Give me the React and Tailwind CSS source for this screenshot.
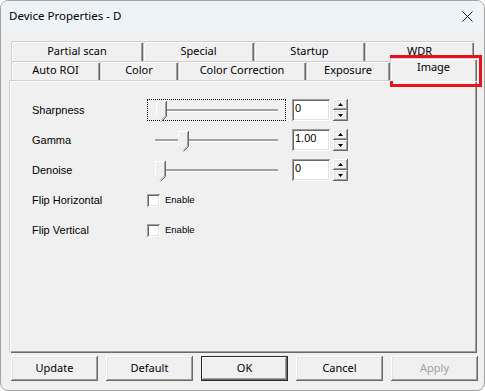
import React from "react";

const RAISED =
  "shadow-[inset_-1px_-1px_0_#696969,inset_1px_1px_0_#ffffff,inset_-2px_-2px_0_#a0a0a0,inset_2px_2px_0_#e3e3e3]";
const SUNKEN =
  "shadow-[inset_1px_1px_0_#a0a0a0,inset_-1px_-1px_0_#ffffff,inset_2px_2px_0_#696969,inset_-2px_-2px_0_#e3e3e3]";
const TAB =
  "shadow-[inset_1px_1px_0_#cfcfcf,inset_2px_2px_0_#ffffff,inset_-1px_0_0_#696969,inset_-2px_0_0_#a0a0a0]";

function Tab({ label, w, className = "" }) {
  return (
    <div
      className={`h-full flex items-center justify-center rounded-t-[2px] bg-[#f0f0f0] text-[11px] ${TAB} ${className}`}
      style={{ width: w }}
    >
      {label}
    </div>
  );
}

function Thumb({ left }) {
  return (
    <svg
      className="absolute top-[1px]"
      style={{ left }}
      width="11"
      height="21"
      viewBox="0 0 11 21"
    >
      <path d="M0.5 0.5 H10.5 V15.5 L5.5 20.5 L0.5 15.5 Z" fill="#f0f0f0" />
      <polyline points="0.5,15.5 0.5,0.5 10,0.5" fill="none" stroke="#ffffff" />
      <polyline points="0.5,15.5 5,20" fill="none" stroke="#e3e3e3" />
      <polyline points="10.5,0 10.5,15.5 5.5,20.5" fill="none" stroke="#696969" />
      <polyline points="9.5,1 9.5,15 5.5,19" fill="none" stroke="#a0a0a0" />
    </svg>
  );
}

function Slider({ thumb, focus, trackLeft = 7 }) {
  return (
    <div
      className={`relative w-[139px] h-[22px] border ${
        focus ? "border-dotted border-black" : "border-transparent"
      }`}
    >
      <div
        className="absolute top-[9px] h-[3px] bg-[#a0a0a0] border-b border-white"
        style={{ left: trackLeft, right: 7 }}
      />
      <Thumb left={thumb} />
    </div>
  );
}

function Arrow({ up }) {
  return (
    <svg width="5" height="3" viewBox="0 0 5 3">
      {up ? (
        <path d="M2.5 0 L5 3 L0 3 Z" fill="#000" />
      ) : (
        <path d="M0 0 L5 0 L2.5 3 Z" fill="#000" />
      )}
    </svg>
  );
}

function Spin({ value }) {
  return (
    <div className="flex items-center gap-[3px]">
      <div
        className={`w-[38px] h-[22px] bg-white ${SUNKEN} pl-[3px] pt-[2px] text-[11px] leading-[14px] font-['Liberation_Sans',Arial,sans-serif]`}
      >
        {value}
      </div>
      <div className="flex flex-col">
        <div className={`w-[15px] h-[11px] bg-[#f0f0f0] ${RAISED} flex items-center justify-center`}>
          <Arrow up />
        </div>
        <div className={`w-[15px] h-[11px] bg-[#f0f0f0] ${RAISED} flex items-center justify-center`}>
          <Arrow />
        </div>
      </div>
    </div>
  );
}

function Check() {
  return (
    <div className="flex items-center gap-[5px]">
      <div className={`w-[13px] h-[13px] bg-white ${SUNKEN}`} />
      <span className="text-[9.5px] font-['Liberation_Sans',Arial,sans-serif]">Enable</span>
    </div>
  );
}

function Row({ label, children }) {
  return (
    <div className="flex items-center h-[30px]">
      <div className="w-[115px] text-[11px] font-['Liberation_Sans',Arial,sans-serif]">{label}</div>
      {children}
    </div>
  );
}

function Button({ label, isDefault, disabled }) {
  return (
    <div
      className={`w-[87px] h-[25px] flex items-center justify-center text-[11px] bg-[#f0f0f0] ${
        isDefault
          ? "border border-[#2b2b2b] shadow-[inset_-1px_-1px_0_#696969,inset_1px_1px_0_#ffffff,inset_-2px_-2px_0_#a0a0a0]"
          : RAISED
      } ${disabled ? "text-[#a0a0a0]" : "text-black"}`}
    >
      {label}
    </div>
  );
}

export default function App() {
  return (
    <div className="w-[485px] h-[391px] bg-white">
      <div className="relative w-[485px] h-[391px] rounded-[8px] border border-[#a3a3a3] bg-[#f0f0f0] overflow-hidden flex flex-col font-['Noto_Sans',sans-serif] text-black">
        <div className="h-[30px] shrink-0 bg-[#eef3f8] flex items-center justify-between pl-[8px] pr-[11px]">
          <span className="text-[11.5px]">Device Properties - D</span>
          <svg width="11" height="11" viewBox="0 0 11 11">
            <path d="M0.5 0.5 L10.5 10.5 M10.5 0.5 L0.5 10.5" stroke="#1a1a1a" strokeWidth="1" />
          </svg>
        </div>

        <div className="pl-[8px] pt-[10px]">
          <div className="flex ml-[2px] h-[20px]">
            <Tab label="Partial scan" w={132} />
            <Tab label="Special" w={111} />
            <Tab label="Startup" w={111} />
            <Tab label="WDR" w={109} />
          </div>
          <div className="flex ml-[2px] h-[19px]">
            <Tab label="Auto ROI" w={89} />
            <Tab label="Color" w={78} />
            <Tab label="Color Correction" w={128} />
            <Tab label="Exposure" w={84} />
            <div
              className={`relative z-10 w-[87px] h-[23px] -mt-[3px] flex items-start justify-center pt-[1px] bg-[#f0f0f0] rounded-t-[2px] text-[11px] ${TAB}`}
            >
              Image
            </div>
          </div>

          <div
            className={`w-[468px] h-[273px] pt-[15px] pl-[23px] bg-[#f0f0f0] shadow-[inset_1px_1px_0_#cfcfcf,inset_2px_2px_0_#ffffff,inset_-1px_-1px_0_#696969,inset_-2px_-2px_0_#a0a0a0]`}
          >
            <Row label="Sharpness">
              <div className="flex items-center gap-[6px]">
                <Slider thumb={8} focus trackLeft={9} />
                <Spin value="0" />
              </div>
            </Row>
            <Row label="Gamma">
              <div className="flex items-center gap-[6px]">
                <Slider thumb={30} trackLeft={7} />
                <Spin value="1.00" />
              </div>
            </Row>
            <Row label="Denoise">
              <div className="flex items-center gap-[6px]">
                <Slider thumb={7} trackLeft={8} />
                <Spin value="0" />
              </div>
            </Row>
            <Row label="Flip Horizontal">
              <Check />
            </Row>
            <Row label="Flip Vertical">
              <Check />
            </Row>
          </div>

          <div className="flex gap-[8px] ml-[2px] mt-[3px]">
            <Button label="Update" />
            <Button label="Default" />
            <Button label="OK" isDefault />
            <Button label="Cancel" />
            <Button label="Apply" disabled />
          </div>
        </div>

        <div className="absolute left-[389px] top-[54px] w-[92px] h-[32px] border-[3px] border-[#e5141b] pointer-events-none" />
      </div>
    </div>
  );
}
